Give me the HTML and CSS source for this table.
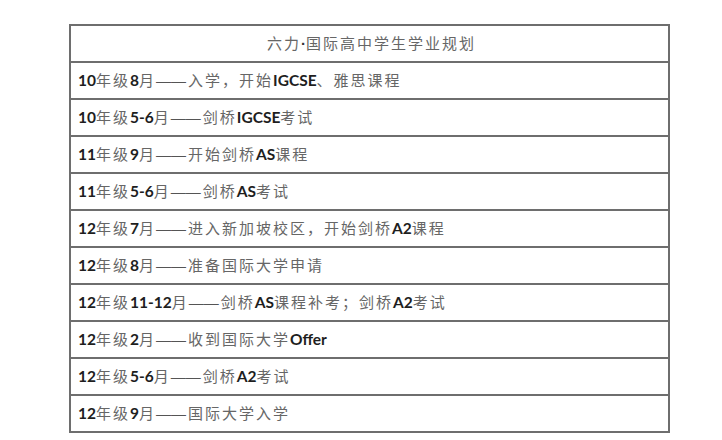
FILE: index.html
```html
<!DOCTYPE html>
<html lang="zh">
<head>
<meta charset="utf-8">
<link rel="stylesheet" href="styles.css">
</head>
<body>
<table class="plan">
  <tr><th>六力<span class="dot">·</span>国际高中学生学业规划</th></tr>
  <tr><td><b>10</b>年级<b>8</b>月<span class="dash">——</span>入学，开始<b>IGCSE</b>、雅思课程</td></tr>
  <tr><td><b>10</b>年级<b>5-6</b>月<span class="dash">——</span>剑桥<b>IGCSE</b>考试</td></tr>
  <tr><td><b>11</b>年级<b>9</b>月<span class="dash">——</span>开始剑桥<b>AS</b>课程</td></tr>
  <tr><td><b>11</b>年级<b>5-6</b>月<span class="dash">——</span>剑桥<b>AS</b>考试</td></tr>
  <tr><td><b>12</b>年级<b>7</b>月<span class="dash">——</span>进入新加坡校区，开始剑桥<b>A2</b>课程</td></tr>
  <tr><td><b>12</b>年级<b>8</b>月<span class="dash">——</span>准备国际大学申请</td></tr>
  <tr><td><b>12</b>年级<b>11-12</b>月<span class="dash">——</span>剑桥<b>AS</b>课程补考；剑桥<b>A2</b>考试</td></tr>
  <tr><td><b>12</b>年级<b>2</b>月<span class="dash">——</span>收到国际大学<b>Offer</b></td></tr>
  <tr><td><b>12</b>年级<b>5-6</b>月<span class="dash">——</span>剑桥<b>A2</b>考试</td></tr>
  <tr><td><b>12</b>年级<b>9</b>月<span class="dash">——</span>国际大学入学</td></tr>
</table>
</body>
</html>
```
FILE: styles.css
```css
html, body {
  margin: 0;
  padding: 0;
  background: #ffffff;
}
body {
  padding: 24px 0 0 69px;
  font-family: "Noto Sans CJK SC", sans-serif;
}
.plan {
  border-collapse: collapse;
  width: 601px;
}
.plan th, .plan td {
  border: 2px solid #6e6e6e;
  height: 35px;
  padding: 0 0 0 7px;
  font-size: 15px;
  letter-spacing: 2px;
  font-weight: 400;
  color: #666666;
  line-height: 20px;
  text-align: left;
}
.plan th {
  text-align: center;
  padding: 0 0 0 4px;
}
.plan b {
  font-family: "Lato", "Noto Sans CJK SC", sans-serif;
  font-weight: 700;
  font-size: 15.5px;
  letter-spacing: 0;
  color: #1e1e1e;
}
.plan .dash {
  font-family: "Liberation Sans", sans-serif;
  font-size: 15px;
  letter-spacing: 0;
  margin-right: 2px;
  color: #555555;
}
.plan .dot {
  font-family: "Liberation Sans", sans-serif;
  font-weight: 700;
  letter-spacing: 0;
  color: #333333;
}
```
